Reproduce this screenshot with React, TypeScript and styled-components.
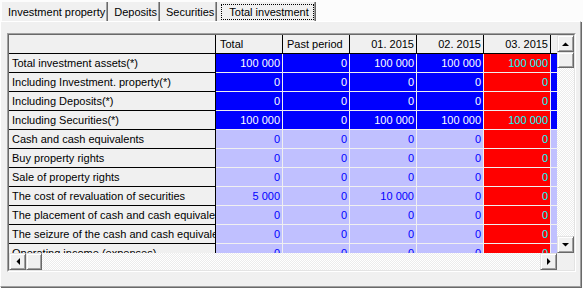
import React from "react";
import styled, { createGlobalStyle, css } from "styled-components";

const Global = createGlobalStyle`
  html, body { margin: 0; padding: 0; background: #fcfcfc; }
  body { font-family: "Liberation Sans", Arial, sans-serif; font-size: 11px; color: #000; }
  * { box-sizing: border-box; }
`;

const Window = styled.div`
  width: 583px;
  height: 288px;
  display: flex;
  flex-direction: column;
  background: #fcfcfc;
  overflow: hidden;
`;

const TabStrip = styled.div`
  display: flex;
  align-items: flex-end;
  height: 21px;
  padding-left: 2px;
`;

const Tab = styled.div<{ $active?: boolean }>`
  height: 19px;
  display: flex;
  align-items: center;
  padding: 0 3px 0 6px;
  background: #f0f0f0;
  white-space: nowrap;
  box-shadow: inset -1px 0 0 #696969, inset -2px 0 0 #a0a0a0;
  ${(p) =>
    p.$active &&
    css`
      padding: 0 2px 0 4px;
    `}
`;

const Focus = styled.span`
  border: 1px dotted #000;
  padding: 0 4px 0 7px;
  line-height: 14px;
`;

const Page = styled.div`
  height: 266px;
  margin-right: 2px;
  background: #f0f0f0;
  border-top: 1px solid #fff;
  border-left: 1px solid #fff;
  border-right: 1px solid #a0a0a0;
  border-bottom: 1px solid #a0a0a0;
  box-shadow: 1px 1px 0 #696969;
  padding: 11px 0 0 6px;
`;

const Frame = styled.div`
  width: 569px;
  height: 239px;
  border: 1px solid;
  border-color: #a0a0a0 #fff #fff #a0a0a0;
`;

const FrameInner = styled.div`
  width: 100%;
  height: 100%;
  border: 1px solid;
  border-color: #696969 #e3e3e3 #e3e3e3 #696969;
  display: grid;
  grid-template-columns: 548px 17px;
  grid-template-rows: 218px 17px;
  background: #f0f0f0;
`;

const Viewport = styled.div`
  overflow: hidden;
  background: #fff;
`;

const Table = styled.div`
  display: grid;
  grid-template-columns: 207px repeat(6, 67px);
  grid-auto-rows: 19px;
  width: max-content;
`;

type Kind = "head" | "fixed" | "sum" | "plain" | "red";

const Cell = styled.div<{ $kind: Kind; $align?: "left" | "right" }>`
  border-right: 1px solid;
  border-bottom: 1px solid;
  line-height: 18px;
  white-space: nowrap;
  overflow: hidden;
  text-align: ${(p) => (p.$align === "left" ? "left" : "right")};
  padding: ${(p) => (p.$align === "left" ? "0 2px 0 4px" : "0 2px 0 2px")};
  ${(p) => {
    switch (p.$kind) {
      case "head":
      case "fixed":
        return css`
          background: #f0f0f0;
          color: #000;
          border-color: #000;
        `;
      case "sum":
        return css`
          background: #0000ff;
          color: #fff;
          border-color: #f0f0f0;
        `;
      case "plain":
        return css`
          background: #c0c0ff;
          color: #0000ff;
          border-color: #f0f0f0;
        `;
      case "red":
        return css`
          background: #ff0000;
          color: #00ffff;
          border-color: #f0f0f0;
        `;
    }
  }}
  ${(p) =>
    p.$kind === "fixed" &&
    css`
      padding-left: 3px;
    `}
`;

const VScroll = styled.div`
  display: flex;
  flex-direction: column;
`;

const HScroll = styled.div`
  display: flex;
`;

const Track = styled.div<{ $vertical?: boolean }>`
  flex: 1;
  display: flex;
  flex-direction: ${(p) => (p.$vertical ? "column" : "row")};
  background: repeating-conic-gradient(#ffffff 0 25%, #ececec 0 50%) 0 0 / 2px 2px;
`;

const Raised = styled.div<{ $w: number; $h: number }>`
  width: ${(p) => p.$w}px;
  height: ${(p) => p.$h}px;
  flex: none;
  display: flex;
  align-items: center;
  justify-content: center;
  background: #f0f0f0;
  border: 1px solid;
  border-color: #e3e3e3 #696969 #696969 #e3e3e3;
  box-shadow: inset 1px 1px 0 #fff, inset -1px -1px 0 #a0a0a0;
`;

const Corner = styled.div`
  background: #f0f0f0;
`;

type Dir = "up" | "down" | "left" | "right";

const Arrow = ({ dir }: { dir: Dir }) => {
  const pts: Record<Dir, string> = {
    up: "0,4 7,4 3.5,0.5",
    down: "0,0 7,0 3.5,3.5",
    left: "4,0 4,7 0.5,3.5",
    right: "0,0 0,7 3.5,3.5",
  };
  const vertical = dir === "up" || dir === "down";
  const w = vertical ? 7 : 4;
  const h = vertical ? 4 : 7;
  return (
    <svg width={w} height={h} viewBox={`0 0 ${w} ${h}`}>
      <polygon points={pts[dir]} fill="#000" />
    </svg>
  );
};

const headers: { text: string; align: "left" | "right" }[] = [
  { text: "", align: "left" },
  { text: "Total", align: "left" },
  { text: "Past period", align: "left" },
  { text: "01. 2015", align: "right" },
  { text: "02. 2015", align: "right" },
  { text: "03. 2015", align: "right" },
  { text: "04. 2015", align: "right" },
];

const Z = ["0", "0", "0", "0", "0", "0"];
const rows: { label: string; sum?: boolean; v: string[] }[] = [
  { label: "Total investment assets(*)", sum: true, v: ["100 000", "0", "100 000", "100 000", "100 000", "100 000"] },
  { label: "Including Investment. property(*)", sum: true, v: Z },
  { label: "Including Deposits(*)", sum: true, v: Z },
  { label: "Including Securities(*)", sum: true, v: ["100 000", "0", "100 000", "100 000", "100 000", "100 000"] },
  { label: "Cash and cash equivalents", v: Z },
  { label: "Buy property rights", v: Z },
  { label: "Sale of property rights", v: Z },
  { label: "The cost of revaluation of securities", v: ["5 000", "0", "10 000", "0", "0", "0"] },
  { label: "The placement of cash and cash equivalents", v: Z },
  { label: "The seizure of the cash and cash equivalents", v: Z },
  { label: "Operating income (expenses)", v: Z },
];

export default function App() {
  return (
    <>
      <Global />
      <Window>
        <TabStrip>
          <Tab>Investment property</Tab>
          <Tab>Deposits</Tab>
          <Tab>Securities</Tab>
          <Tab $active>
            <Focus>Total investment</Focus>
          </Tab>
        </TabStrip>
        <Page>
          <Frame>
            <FrameInner>
              <Viewport>
                <Table>
                  {headers.map((h, i) => (
                    <Cell key={`h${i}`} $kind="head" $align={h.align}>
                      {h.text}
                    </Cell>
                  ))}
                  {rows.map((r, ri) => (
                    <React.Fragment key={ri}>
                      <Cell $kind="fixed" $align="left">
                        {r.label}
                      </Cell>
                      {r.v.map((val, ci) => (
                        <Cell key={ci} $kind={ci === 4 ? "red" : r.sum ? "sum" : "plain"}>
                          {val}
                        </Cell>
                      ))}
                    </React.Fragment>
                  ))}
                </Table>
              </Viewport>
              <VScroll>
                <Raised $w={17} $h={17}>
                  <Arrow dir="up" />
                </Raised>
                <Track $vertical>
                  <Raised $w={17} $h={16} />
                </Track>
                <Raised $w={17} $h={17}>
                  <Arrow dir="down" />
                </Raised>
              </VScroll>
              <HScroll>
                <Raised $w={17} $h={17}>
                  <Arrow dir="left" />
                </Raised>
                <Track>
                  <Raised $w={16} $h={17} />
                </Track>
                <Raised $w={17} $h={17}>
                  <Arrow dir="right" />
                </Raised>
              </HScroll>
              <Corner />
            </FrameInner>
          </Frame>
        </Page>
      </Window>
    </>
  );
}
